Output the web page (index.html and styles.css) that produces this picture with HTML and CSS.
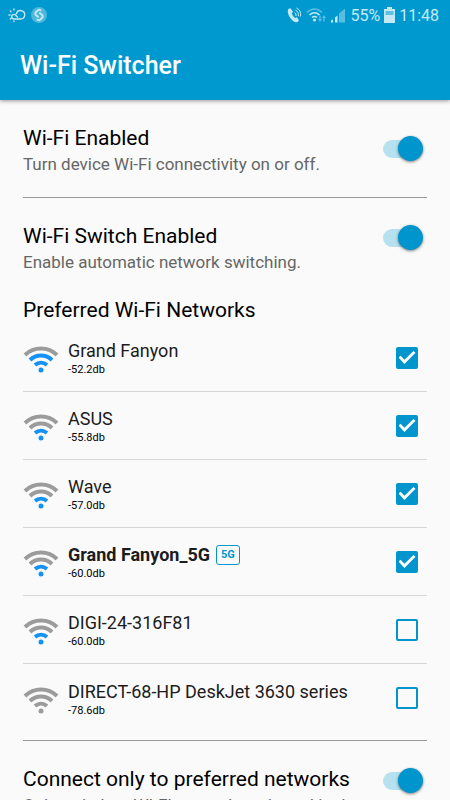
FILE: index.html
```html
<!DOCTYPE html>
<html lang="en">
<head>
<meta charset="utf-8">
<meta name="viewport" content="width=device-width, initial-scale=1">
<title>Wi-Fi Switcher</title>
<link rel="stylesheet" href="styles.css">
</head>
<body>
<svg class="defs" aria-hidden="true">
  <symbol id="wifi" viewBox="0 0 36 28">
    <path class="arc arc-3" d="M2 10A23 23 0 0 1 34 10"/>
    <path class="arc arc-2" d="M7 15A16 16 0 0 1 29 15"/>
    <path class="arc arc-1" d="M12 20A9.500 9.500 0 0 1 24 20"/>
    <circle class="dot" cx="18" cy="25" r="2.500"/>
  </symbol>
</svg>
<header class="top">
  <div class="status">
    <div class="status-group">
      <svg class="weather" width="18" height="14" viewBox="0 0 18 14" aria-hidden="true">
        <path d="M9.500 9L8 7.500A2.300 2.300 0 1 0 6.500 11H12.500A4.200 4.200 0 1 0 8.500 5.500"/>
        <path d="M6 1v1M2.300 3l.7.700M1 7h1M2.300 11l.7-.7M6 13v.5"/>
      </svg>
      <svg width="16" height="16" viewBox="0 0 16 16" aria-hidden="true">
        <circle class="disc" cx="8" cy="8" r="8"/>
        <path class="shazam" d="M7 9.800L5 8.200a2.200 2.200 0 0 1 0-3.200L7 3.300a2 2 0 0 1 2.500 0M9 6.200L11 7.800a2.200 2.200 0 0 1 0 3.200L9 12.700a2 2 0 0 1-2.500 0"/>
      </svg>
    </div>
    <div class="status-group">
      <svg width="15" height="16" viewBox="0 0 15 16" aria-hidden="true">
        <path class="fill" d="M1 2.500L3.200 1 6 4.700 4.700 6.600Q5.700 9.500 8 11l2-.8 2 3.600-2 1.400Q6.500 15.500 3.300 11T1 2.500z"/>
        <path class="wave thin" d="M7.500 5.500q2 1 1.500 3.500M8.500 3.200q3.500 1.600 2.800 6M9.500 1q5 2.300 4 8.500"/>
      </svg>
      <svg width="20" height="16" viewBox="0 0 20 16" aria-hidden="true">
        <path class="wave faint" d="M1 5.500Q8.500-1.500 16 5.500"/>
        <path class="wave" d="M3.500 8Q8.500 3.500 13.500 8M6 10.500Q8.500 8.500 11 10.500"/>
        <circle class="fill" cx="8.500" cy="13" r="1.500"/>
        <path class="fill faint" d="M12 12h1.300V8.500h1.400V12H16l-2 3zM16 11l2-3 2 3h-1.300v3.500h-1.400V11z"/>
      </svg>
      <svg width="16" height="16" viewBox="0 0 16 16" aria-hidden="true">
        <path class="fill" d="M1 15.500v-2l2-1v3zM5 15.500v-5l2.500-2v7z"/>
        <path class="fill faint" d="M9 15.500V6.500l6-5v14z"/>
      </svg>
      <span>55%</span>
      <svg width="11" height="16" viewBox="0 0 11 16" aria-hidden="true">
        <path class="fill" d="M3 0h5v2h3v14H0V2h3z"/>
        <path class="drained" d="M1.500 4h8v4h-8z"/>
      </svg>
      <time>11:48</time>
    </div>
  </div>
  <h1>Wi-Fi Switcher</h1>
</header>
<main>
  <section class="setting">
    <label for="wifi-on"><span class="heading">Wi-Fi Enabled</span><span class="hint">Turn device Wi-Fi connectivity on or off.</span></label>
    <input class="switch centered" id="wifi-on" type="checkbox" role="switch" checked>
  </section>
  <section class="setting-group">
    <div class="setting">
      <label for="switch-on"><span class="heading">Wi-Fi Switch Enabled</span><span class="hint">Enable automatic network switching.</span></label>
      <input class="switch" id="switch-on" type="checkbox" role="switch" checked>
    </div>
    <h2 class="heading">Preferred Wi-Fi Networks</h2>
    <ul class="networks">
      <li class="level-2">
        <svg class="wifi" aria-hidden="true"><use href="#wifi"/></svg>
        <label for="n1"><span class="name">Grand Fanyon</span><span class="db">-52.2db</span></label>
        <input class="check" id="n1" type="checkbox" checked>
      </li>
      <li class="level-1">
        <svg class="wifi" aria-hidden="true"><use href="#wifi"/></svg>
        <label for="n2"><span class="name">ASUS</span><span class="db">-55.8db</span></label>
        <input class="check" id="n2" type="checkbox" checked>
      </li>
      <li class="level-1">
        <svg class="wifi" aria-hidden="true"><use href="#wifi"/></svg>
        <label for="n3"><span class="name">Wave</span><span class="db">-57.0db</span></label>
        <input class="check" id="n3" type="checkbox" checked>
      </li>
      <li class="level-1 current">
        <svg class="wifi" aria-hidden="true"><use href="#wifi"/></svg>
        <label for="n4"><span class="name">Grand Fanyon_5G<span class="band">5G</span></span><span class="db">-60.0db</span></label>
        <input class="check" id="n4" type="checkbox" checked>
      </li>
      <li class="level-1">
        <svg class="wifi" aria-hidden="true"><use href="#wifi"/></svg>
        <label for="n5"><span class="name">DIGI-24-316F81</span><span class="db">-60.0db</span></label>
        <input class="check" id="n5" type="checkbox">
      </li>
      <li>
        <svg class="wifi" aria-hidden="true"><use href="#wifi"/></svg>
        <label for="n6"><span class="name">DIRECT-68-HP DeskJet 3630 series</span><span class="db">-78.6db</span></label>
        <input class="check" id="n6" type="checkbox">
      </li>
    </ul>
  </section>
  <section class="setting">
    <label for="only"><span class="heading">Connect only to preferred networks</span><span class="hint">Only switch to WI-FI networks selected in the</span></label>
    <input class="switch" id="only" type="checkbox" role="switch" checked>
  </section>
</main>
</body>
</html>
```
FILE: styles.css
```css
* { box-sizing: border-box; }

html { height: 100%; }

body {
  display: flex;
  flex-direction: column;
  height: 100%;
  margin: 0;
  overflow: hidden;
  background: #fafafa;
  color: #000;
  font-family: Roboto, "Liberation Sans", sans-serif;
}

.defs { position: absolute; width: 0; height: 0; }

.top {
  flex: none;
  padding-bottom: 18px;
  background: #0099cf;
  color: #fff;
  box-shadow: 0 1px 4px rgba(0, 0, 0, 0.4);
}

.status {
  display: flex;
  justify-content: space-between;
  align-items: center;
  height: 30px;
  padding: 0 11px 0 8px;
  color: #c4e9f5;
  font-size: 16px;
}

.status-group { display: flex; align-items: center; gap: 4px; }
.status-group:first-child { gap: 5px; }

.weather path { fill: none; stroke: #c4e9f5; stroke-width: 1.4; stroke-linecap: round; }
.disc { fill: #4db8dd; }
.shazam { fill: none; stroke: #c4e9f5; stroke-width: 2; stroke-linecap: round; }
.fill { fill: #c4e9f5; }
.wave { fill: none; stroke: #c4e9f5; stroke-width: 1.6; }
.thin { stroke-width: 1; }
.faint { opacity: 0.45; }
.drained { fill: #5fbfe0; }

h1 {
  margin: 20px 20px 0;
  font-size: 25px;
  font-weight: 500;
  line-height: 32px;
}

main { flex: 1; padding: 0 23px; }

.setting { display: flex; align-items: flex-start; justify-content: space-between; gap: 12px; }
main > .setting { padding-top: 24px; }
.setting-group {
  margin-top: 21px;
  padding-top: 24px;
  border-top: 1px solid #999;
  border-bottom: 1px solid #999;
}

.heading {
  display: block;
  margin: 0;
  font-size: 21px;
  font-weight: 400;
  line-height: 28px;
}

.hint {
  display: block;
  color: #666;
  font-size: 17px;
  line-height: 24px;
  white-space: nowrap;
}

h2.heading { margin-top: 22px; }

.switch {
  appearance: none;
  position: relative;
  flex: none;
  width: 36px;
  height: 18px;
  margin: 7px 8px 0 0;
  border-radius: 9px;
  background: #b8e1ef;
}

.switch.centered { margin-top: 16px; }

.switch::before {
  content: "";
  position: absolute;
  top: -4px;
  right: -4px;
  width: 25px;
  height: 25px;
  border-radius: 50%;
  background: #0096cd;
  box-shadow: 0 1px 3px rgba(0, 0, 0, 0.5);
}

.networks { margin: 0; padding: 0 0 8px; list-style: none; }

.networks li {
  display: flex;
  align-items: center;
  height: 68px;
  border-bottom: 1px solid #d8d8d8;
}
.networks li:last-child { border-bottom: 0; }
.networks label { flex: 1; margin-left: 9px; padding-top: 3px; }

.wifi { width: 36px; height: 28px; margin-top: 3px; }
.arc { fill: none; stroke: #9b9b9b; stroke-width: 4; }
.dot { fill: var(--dot, #9b9b9b); }
.arc-1 { stroke: var(--near, #9b9b9b); }
.arc-2 { stroke: var(--mid, #9b9b9b); }
.level-1 { --dot: #1591f5; --near: #1591f5; }
.level-2 { --dot: #1591f5; --near: #1591f5; --mid: #1591f5; }

.name {
  display: flex;
  align-items: center;
  gap: 6px;
  color: #1c1c1c;
  font-size: 18px;
  line-height: 22px;
}

.db { display: block; font-size: 11px; line-height: 16px; }

.current .name { font-weight: 700; }

.band {
  padding: 0 4px;
  border: 1px solid #0096cd;
  border-radius: 3px;
  color: #0096cd;
  font-size: 11px;
  line-height: 18px;
}

.check {
  appearance: none;
  flex: none;
  width: 22px;
  height: 22px;
  margin: 0 9px 0 0;
  border: 2px solid #0096cd;
  border-radius: 2px;
}

.check:checked {
  display: grid;
  place-items: center;
  background: #0096cd;
}

.check:checked::before {
  content: "";
  width: 17px;
  height: 13px;
  background: #fff;
  clip-path: polygon(0 50%, 12% 37%, 35% 68%, 88% 0, 100% 13%, 35% 100%);
}
```
